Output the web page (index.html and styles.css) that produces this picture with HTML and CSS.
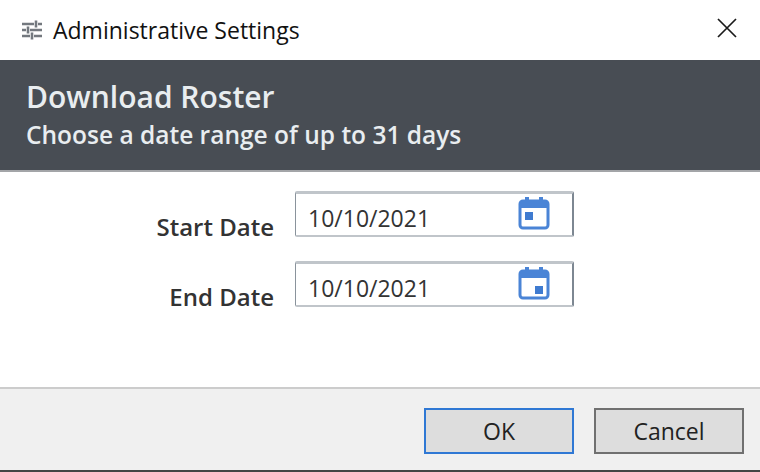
FILE: index.html
```html
<!DOCTYPE html>
<html lang="en">
<head>
  <meta charset="UTF-8">
  <title>Administrative Settings</title>
  <link rel="stylesheet" href="styles.css">
</head>
<body>
  <div class="dialog">
    <div class="titlebar">
      <svg class="title-icon" viewBox="0 0 20 20" fill="none" stroke="#73787e" stroke-width="2.600">
        <path d="M0 4H12M16 4H20M14 0.500V7.500"/>
        <path d="M0 10H4M8 10H20M6 6.500V13.500"/>
        <path d="M0 16H8M12 16H20M10 12.500V19.500"/>
      </svg>
      <span class="title-text">Administrative Settings</span>
      <svg class="close-icon" viewBox="0 0 20 20" fill="none" stroke="#1a1a1a" stroke-width="1.700">
        <path d="M1 1L19 19M19 1L1 19"/>
      </svg>
    </div>

    <div class="banner">
      <h1>Download Roster</h1>
      <p>Choose a date range of up to 31 days</p>
    </div>

    <div class="form">
      <div class="form-row">
        <label>Start Date</label>
        <div class="date-input">
          <span>10/10/2021</span>
          <svg class="cal-icon" viewBox="0 0 32 34" fill="none">
            <path d="M2 8a3 3 0 0 1 3-3h22a3 3 0 0 1 3 3v21a3 3 0 0 1-3 3H5a3 3 0 0 1-3-3z" stroke="#4a84d6" stroke-width="3"/>
            <path d="M2 5h28v7H2zM7 1h4v5H7zM21 1h4v5h-4z" fill="#4a84d6"/>
            <rect x="7" y="16" width="8" height="8" fill="#3f7bd0"/>
          </svg>
        </div>
      </div>
      <div class="form-row">
        <label>End Date</label>
        <div class="date-input">
          <span>10/10/2021</span>
          <svg class="cal-icon" viewBox="0 0 32 34" fill="none">
            <path d="M2 8a3 3 0 0 1 3-3h22a3 3 0 0 1 3 3v21a3 3 0 0 1-3 3H5a3 3 0 0 1-3-3z" stroke="#4a84d6" stroke-width="3"/>
            <path d="M2 5h28v7H2zM7 1h4v5H7zM21 1h4v5h-4z" fill="#4a84d6"/>
            <rect x="17" y="20" width="8" height="8" fill="#3f7bd0"/>
          </svg>
        </div>
      </div>
    </div>

    <div class="footer">
      <button class="button button-default">OK</button>
      <button class="button">Cancel</button>
    </div>
  </div>
</body>
</html>
```

FILE: styles.css
```css
html, body {
  margin: 0;
  height: 100%;
}

body {
  font-family: 'Open Sans', 'Noto Sans', sans-serif;
  background-color: white;
  color: #222;
  overflow: hidden;
}

.dialog {
  display: flex;
  flex-direction: column;
  height: 472px;
}

.titlebar {
  display: flex;
  align-items: center;
  height: 60px;
  padding: 0 22px;
  box-sizing: border-box;
}

.title-icon {
  width: 20px;
  height: 20px;
  margin-right: 11px;
}

.title-text {
  font-size: 23px;
  color: #111;
  flex: 1;
}

.close-icon {
  width: 20px;
  height: 20px;
  margin-right: 1px;
  margin-top: -4px;
}

.banner {
  height: 112px;
  box-sizing: border-box;
  background-color: #484d54;
  border-bottom: 2px solid #a3a5a8;
  padding: 17px 26px 0;
  color: #e9edf0;
}

.banner h1 {
  margin: 0;
  font-size: 30px;
  line-height: 40px;
  font-weight: 600;
}

.banner p {
  margin: 3px 0 0;
  font-size: 24.500px;
  line-height: 30px;
  font-weight: 600;
}

.form {
  flex: 1;
  padding-top: 19px;
  display: flex;
  flex-direction: column;
  gap: 24px;
}

.form-row {
  display: flex;
  align-items: flex-start;
  height: 46px;
}

.form-row label {
  width: 274px;
  padding-top: 21px;
  font-size: 24px;
  line-height: 30px;
  font-weight: 600;
  text-align: right;
  color: #333;
}

.date-input {
  display: flex;
  align-items: flex-start;
  justify-content: space-between;
  width: 279px;
  height: 46px;
  margin-left: 21px;
  box-sizing: border-box;
  background-color: white;
  border: 1px solid #c0c5ca;
  border-top-width: 3px;
  border-bottom-width: 2px;
  border-left-color: #8a939c;
  border-right: 2px solid #7d8792;
  border-radius: 2px;
  padding: 9px 22px 0 12px;
  font-size: 23px;
  line-height: 30px;
  color: #333;
}

.cal-icon {
  width: 32px;
  height: 34px;
  margin-top: -7px;
}

.footer {
  height: 85px;
  box-sizing: border-box;
  display: flex;
  justify-content: flex-end;
  align-items: flex-start;
  gap: 20px;
  padding: 19px 16px 0 0;
  background-color: #f0f0f0;
  border-top: 2px solid #cccccc;
  border-bottom: 2px solid #444;
}

.button {
  width: 150px;
  height: 46px;
  background-color: #dddddd;
  border: 2px solid #707070;
  font-family: inherit;
  font-size: 23px;
  color: #222;
  padding: 0;
}

.button-default {
  border-color: #2f78d4;
}
```
